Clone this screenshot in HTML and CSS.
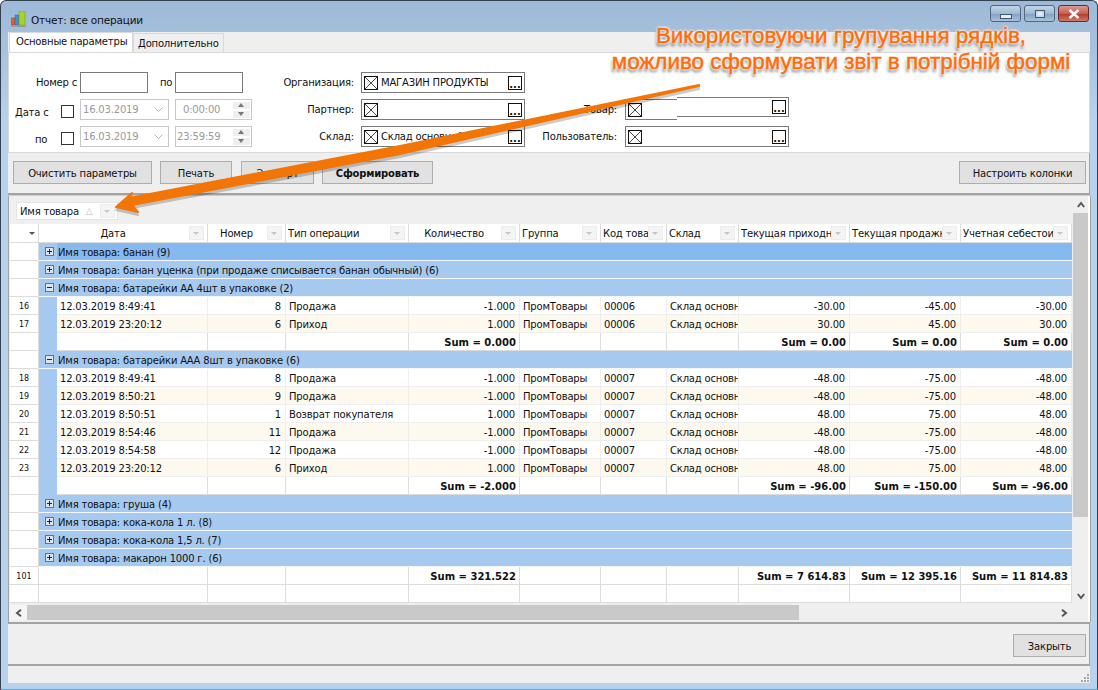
FILE: index.html
```html
<!DOCTYPE html>
<html>
<head>
    <meta charset="UTF-8">
    <title>Отчет: все операции</title>
    <link rel="stylesheet" href="styles.css">
</head>
<body>
<div class="window">
    <div class="titlebar">
        <svg class="app_icon" width="16" height="16" viewBox="0 0 16 16">
            <rect x="0" y="7" width="4" height="7" fill="#e0603a" stroke="#a8402a" stroke-width="0.5"/>
            <rect x="4" y="4" width="4" height="10" fill="#3f8ed8" stroke="#2a6aa8" stroke-width="0.5"/>
            <rect x="8" y="0" width="6" height="14" fill="#a8d22a" stroke="#6f9a1e" stroke-width="0.5"/>
            <rect x="0" y="14" width="15" height="2" fill="#9a9a9a"/>
        </svg>
        <span class="title_text">Отчет: все операции</span>
        <div class="win_btns">
            <div class="win_btn"><span class="glyph_min"></span></div>
            <div class="win_btn"><span class="glyph_max"></span></div>
            <div class="win_btn close"><svg width="12" height="10" viewBox="0 0 12 10"><path d="M1.5 1 L10.5 9 M10.5 1 L1.5 9" stroke="#fff" stroke-width="2.4"/></svg></div>
        </div>
    </div>

    <div class="tabs">
        <div class="tab active">Основные параметры</div>
        <div class="tab">Дополнительно</div>
    </div>

    <div class="params">
        <div class="pcol col1">
            <div class="prow">
                <label class="lbl_nomer">Номер с</label>
                <div class="inp"></div>
                <label class="lbl_po">по</label>
                <div class="inp"></div>
            </div>
            <div class="prow">
                <label class="lbl_date">Дата с</label>
                <div class="chk"></div>
                <div class="date">16.03.2019<svg class="dd" width="9" height="6" viewBox="0 0 9 6"><path d="M0.5 0.5 L4.5 4.5 L8.5 0.5" fill="none" stroke="#b5b5b5"/></svg></div>
                <div class="time"><span class="time_val center">0:00:00</span><span class="spin"><i class="up"></i><i class="down"></i></span></div>
            </div>
            <div class="prow">
                <label class="lbl_date2">по</label>
                <div class="chk"></div>
                <div class="date">16.03.2019<svg class="dd" width="9" height="6" viewBox="0 0 9 6"><path d="M0.5 0.5 L4.5 4.5 L8.5 0.5" fill="none" stroke="#b5b5b5"/></svg></div>
                <div class="time"><span class="time_val">23:59:59</span><span class="spin"><i class="up"></i><i class="down"></i></span></div>
            </div>
        </div>
        <div class="pcol col2">
            <div class="prow">
                <label>Организация:</label>
                <div class="field"><span class="xbox"></span><span class="fval">МАГАЗИН ПРОДУКТЫ</span><span class="dots">...</span></div>
            </div>
            <div class="prow">
                <label>Партнер:</label>
                <div class="field"><span class="xbox"></span><span class="fval"></span><span class="dots">...</span></div>
            </div>
            <div class="prow">
                <label>Склад:</label>
                <div class="field"><span class="xbox"></span><span class="fval">Склад основной</span><span class="dots">...</span></div>
            </div>
        </div>
        <div class="pcol col3">
            <div class="prow"></div>
            <div class="prow">
                <label>Товар:</label>
                <div class="field"><span class="xbox"></span><span class="fval"></span>
                    <div class="patch"><span class="dots">...</span></div>
                </div>
            </div>
            <div class="prow">
                <label>Пользователь:</label>
                <div class="field"><span class="xbox"></span><span class="fval"></span><span class="dots">...</span></div>
            </div>
        </div>
    </div>

    <div class="toolbar">
        <button class="b_clear">Очистить параметры</button>
        <button class="b_print">Печать</button>
        <button class="b_export">Экспорт</button>
        <button class="b_make">Сформировать</button>
        <button class="b_cols">Настроить колонки</button>
    </div>

    <div class="grid">
        <div class="grid_main">
            <div class="groupby">
                <div class="chip">Имя товара<span class="sort">△</span><span class="filter"></span></div>
            </div>
            <table>
                <colgroup>
                    <col class="c_num"><col class="c_ind"><col class="c_date"><col class="c_nom"><col class="c_tip"><col class="c_kol"><col class="c_grp"><col class="c_kod"><col class="c_skl"><col class="c_pr"><col class="c_pr"><col class="c_pr">
                </colgroup>
                <thead>
                    <tr>
                        <th class="corner"><span class="corner_arrow"></span></th>
                        <th colspan="2"><div class="hd"><span class="htxt center">Дата</span><span class="filter"></span></div></th>
                        <th><div class="hd"><span class="htxt center">Номер</span><span class="filter"></span></div></th>
                        <th><div class="hd"><span class="htxt">Тип операции</span><span class="filter"></span></div></th>
                        <th><div class="hd"><span class="htxt center">Количество</span><span class="filter"></span></div></th>
                        <th><div class="hd"><span class="htxt">Группа</span><span class="filter"></span></div></th>
                        <th><div class="hd"><span class="htxt">Код това</span><span class="filter"></span></div></th>
                        <th><div class="hd"><span class="htxt">Склад</span><span class="filter"></span></div></th>
                        <th><div class="hd"><span class="htxt">Текущая приходн</span><span class="filter"></span></div></th>
                        <th><div class="hd"><span class="htxt">Текущая продажн</span><span class="filter"></span></div></th>
                        <th><div class="hd"><span class="htxt">Учетная себестои</span><span class="filter"></span></div></th>
                    </tr>
                </thead>
                <tbody>
                    <tr class="group sel"><td class="num"></td><td class="ind"><span class="exp plus"></span></td><td colspan="10">Имя товара: банан (9)</td></tr>
                    <tr class="group"><td class="num"></td><td class="ind"><span class="exp plus"></span></td><td colspan="10">Имя товара: банан уценка (при продаже списывается банан обычный) (6)</td></tr>
                    <tr class="group"><td class="num"></td><td class="ind"><span class="exp"></span></td><td colspan="10">Имя товара: батарейки АА 4шт в упаковке (2)</td></tr>
                    <tr><td class="num">16</td><td class="ind"></td><td>12.03.2019 8:49:41</td><td class="r">8</td><td>Продажа</td><td class="r">-1.000</td><td>ПромТовары</td><td>00006</td><td>Склад основн</td><td class="r">-30.00</td><td class="r">-45.00</td><td class="r">-30.00</td></tr>
                    <tr class="alt"><td class="num">17</td><td class="ind"></td><td>12.03.2019 23:20:12</td><td class="r">6</td><td>Приход</td><td class="r">1.000</td><td>ПромТовары</td><td>00006</td><td>Склад основн</td><td class="r">30.00</td><td class="r">45.00</td><td class="r">30.00</td></tr>
                    <tr class="sum"><td class="num"></td><td class="ind"></td><td></td><td></td><td></td><td>Sum = 0.000</td><td></td><td></td><td></td><td>Sum = 0.00</td><td>Sum = 0.00</td><td>Sum = 0.00</td></tr>
                    <tr class="group"><td class="num"></td><td class="ind"><span class="exp"></span></td><td colspan="10">Имя товара: батарейки ААА 8шт в упаковке (6)</td></tr>
                    <tr><td class="num">18</td><td class="ind"></td><td>12.03.2019 8:49:41</td><td class="r">8</td><td>Продажа</td><td class="r">-1.000</td><td>ПромТовары</td><td>00007</td><td>Склад основн</td><td class="r">-48.00</td><td class="r">-75.00</td><td class="r">-48.00</td></tr>
                    <tr class="alt"><td class="num">19</td><td class="ind"></td><td>12.03.2019 8:50:21</td><td class="r">9</td><td>Продажа</td><td class="r">-1.000</td><td>ПромТовары</td><td>00007</td><td>Склад основн</td><td class="r">-48.00</td><td class="r">-75.00</td><td class="r">-48.00</td></tr>
                    <tr><td class="num">20</td><td class="ind"></td><td>12.03.2019 8:50:51</td><td class="r">1</td><td>Возврат покупателя</td><td class="r">1.000</td><td>ПромТовары</td><td>00007</td><td>Склад основн</td><td class="r">48.00</td><td class="r">75.00</td><td class="r">48.00</td></tr>
                    <tr class="alt"><td class="num">21</td><td class="ind"></td><td>12.03.2019 8:54:46</td><td class="r">11</td><td>Продажа</td><td class="r">-1.000</td><td>ПромТовары</td><td>00007</td><td>Склад основн</td><td class="r">-48.00</td><td class="r">-75.00</td><td class="r">-48.00</td></tr>
                    <tr><td class="num">22</td><td class="ind"></td><td>12.03.2019 8:54:58</td><td class="r">12</td><td>Продажа</td><td class="r">-1.000</td><td>ПромТовары</td><td>00007</td><td>Склад основн</td><td class="r">-48.00</td><td class="r">-75.00</td><td class="r">-48.00</td></tr>
                    <tr class="alt"><td class="num">23</td><td class="ind"></td><td>12.03.2019 23:20:12</td><td class="r">6</td><td>Приход</td><td class="r">1.000</td><td>ПромТовары</td><td>00007</td><td>Склад основн</td><td class="r">48.00</td><td class="r">75.00</td><td class="r">48.00</td></tr>
                    <tr class="sum"><td class="num"></td><td class="ind"></td><td></td><td></td><td></td><td>Sum = -2.000</td><td></td><td></td><td></td><td>Sum = -96.00</td><td>Sum = -150.00</td><td>Sum = -96.00</td></tr>
                    <tr class="group"><td class="num"></td><td class="ind"><span class="exp plus"></span></td><td colspan="10">Имя товара: груша (4)</td></tr>
                    <tr class="group"><td class="num"></td><td class="ind"><span class="exp plus"></span></td><td colspan="10">Имя товара: кока-кола 1 л. (8)</td></tr>
                    <tr class="group"><td class="num"></td><td class="ind"><span class="exp plus"></span></td><td colspan="10">Имя товара: кока-кола 1,5 л. (7)</td></tr>
                    <tr class="group"><td class="num"></td><td class="ind"><span class="exp plus"></span></td><td colspan="10">Имя товара: макарон 1000 г. (6)</td></tr>
                    <tr class="sum total"><td class="num">101</td><td colspan="2"></td><td></td><td></td><td>Sum = 321.522</td><td></td><td></td><td></td><td>Sum = 7 614.83</td><td>Sum = 12 395.16</td><td>Sum = 11 814.83</td></tr>
                    <tr class="sum total"><td class="num"></td><td colspan="2"></td><td></td><td></td><td></td><td></td><td></td><td></td><td></td><td></td><td></td></tr>
                </tbody>
            </table>
            <div class="hscroll">
                <span class="sbtn active"><svg width="8" height="8" viewBox="0 0 8 8"><path d="M6 0.8 L2 4 L6 7.2" fill="none" stroke="#555" stroke-width="2"/></svg></span>
                <span class="hthumb"></span>
                <span class="sbtn end"><svg width="8" height="8" viewBox="0 0 8 8"><path d="M2 0.8 L6 4 L2 7.2" fill="none" stroke="#555" stroke-width="2"/></svg></span>
            </div>
        </div>
        <div class="vscroll">
            <span class="sbtn"><svg width="8" height="8" viewBox="0 0 8 8"><path d="M0.8 6 L4 2 L7.2 6" fill="none" stroke="#555" stroke-width="2"/></svg></span>
            <span class="vthumb"></span>
            <span class="sbtn end"><svg width="8" height="8" viewBox="0 0 8 8"><path d="M0.8 2 L4 6 L7.2 2" fill="none" stroke="#555" stroke-width="2"/></svg></span>
        </div>
    </div>

    <div class="footer">
        <button class="b_close">Закрыть</button>
    </div>
    <div class="status">
        <svg width="9" height="9" viewBox="0 0 9 9" fill="#a9a9a9">
            <rect x="6" y="0" width="2" height="2"/><rect x="3" y="3" width="2" height="2"/><rect x="6" y="3" width="2" height="2"/>
            <rect x="0" y="6" width="2" height="2"/><rect x="3" y="6" width="2" height="2"/><rect x="6" y="6" width="2" height="2"/>
        </svg>
    </div>
</div>

<!-- callout pasted over the window -->
<svg class="arrow" width="1098" height="690" viewBox="0 0 1098 690">
    <polygon class="arrow_shadow" points="699,85 400,146 129,198 132,193 116,207 138,212 132,205 400,154 699,86"/>
    <polygon class="arrow_body" points="699,85 400,146 129,198 132,193 116,207 138,212 132,205 400,154 699,86"/>
</svg>
<div class="callout">Використовуючи групування рядків,<br>можливо сформувати звіт в потрібній формі</div>
</body>
</html>
```

FILE: styles.css
```css
html,
body {
    margin: 0;
    height: 100%;
    overflow: hidden;
}
body {
    position: relative;
    background: #fff;
    font-family: "DejaVu Sans", sans-serif;
    font-size: 10px;
    letter-spacing: -0.18px;
    color: #111;
}
.window {
    box-sizing: border-box;
    width: 1098px;
    height: 690px;
    padding: 0 7px 6px 7px;
    display: flex;
    flex-direction: column;
    border: 1px solid #33424f;
    border-bottom: 1px solid #2cc0d8;
    border-radius: 6px 6px 0 0;
    background: linear-gradient(180deg, #9db9d7 0, #b9d1ea 120px);
}

/* title bar */
.titlebar {
    height: 31px;
    display: flex;
    align-items: center;
    flex-shrink: 0;
}
.app_icon {
    margin: 4px 0 0 3px;
}
.title_text {
    margin: 7px 0 0 4px;
    font-size: 10.5px;
    color: #111;
}
.win_btns {
    margin: -6px 1px 0 auto;
    display: flex;
    gap: 3px;
}
.win_btn {
    width: 31px;
    height: 17px;
    box-sizing: border-box;
    border: 1px solid #4e6680;
    border-radius: 3px;
    display: flex;
    align-items: center;
    justify-content: center;
    background: linear-gradient(180deg, #c2d5e9 0, #9db8d6 50%, #7f9fc2 52%, #a9c3dd 100%);
}
.win_btn.close {
    border-color: #6b2b2b;
    background: linear-gradient(180deg, #dc9a90 0, #c9604f 50%, #b23a2a 52%, #cb7a68 100%);
}
.glyph_min {
    width: 10px;
    height: 3px;
    margin-top: 5px;
    background: #e8eef5;
    border: 1px solid #44566a;
}
.glyph_max {
    width: 8px;
    height: 6px;
    background: #e8eef5;
    border: 1px solid #44566a;
    box-shadow: inset 0 0 0 1.5px #c9d6e4;
}

/* tabs */
.tabs {
    height: 20px;
    display: flex;
    align-items: flex-end;
    flex-shrink: 0;
    background: #efefef;
    padding-left: 1px;
}
.tab {
    box-sizing: border-box;
    height: 19px;
    padding: 4px 4px 0 4px;
    background: #efefef;
    border: 1px solid #d9d9d9;
    border-bottom: none;
}
.tab.active {
    width: 124px;
    height: 20px;
    padding: 3px 0 0 6px;
    background: #fff;
}

/* params */
.params {
    box-sizing: border-box;
    height: 101px;
    flex-shrink: 0;
    display: flex;
    padding: 19px 0 0 0;
    background: #fff;
    border: 1px solid #d9d9d9;
}
.pcol {
    display: flex;
    flex-direction: column;
    gap: 6px;
}
.prow {
    height: 21px;
    display: flex;
    align-items: center;
}
.col1 .lbl_nomer {
    width: 68px;
    margin-right: 3px;
    text-align: right;
}
.col1 .lbl_po {
    width: 15px;
    margin-left: 12px;
}
.lbl_date {
    margin: 6px 0 0 6px;
    width: 46px;
}
.lbl_date2 {
    margin: 6px 0 0 26px;
    width: 26px;
}
.inp {
    box-sizing: border-box;
    width: 68px;
    height: 21px;
    border: 1px solid #7a7a7a;
}
.chk {
    box-sizing: border-box;
    width: 13px;
    height: 13px;
    margin: 3px 6px 0 0;
    border: 1px solid #333;
}
.date {
    box-sizing: border-box;
    width: 89px;
    height: 21px;
    margin-right: 6px;
    padding-left: 2px;
    display: flex;
    align-items: center;
    justify-content: space-between;
    border: 1px solid #c8c8c8;
    color: #999;
}
.dd {
    margin-right: 5px;
}
.time {
    box-sizing: border-box;
    width: 77px;
    height: 21px;
    display: flex;
    align-items: center;
    border: 1px solid #c8c8c8;
    color: #999;
    padding-left: 1px;
}
.time_val {
    flex: 1;
}
.time_val.center {
    padding-left: 6px;
}
.spin {
    width: 17px;
    height: 16px;
    margin-right: 1px;
    display: flex;
    flex-direction: column;
    justify-content: space-between;
}
.spin i {
    display: block;
    height: 7px;
    box-sizing: border-box;
    background: #efefef;
    position: relative;
}
.spin i::after {
    content: "";
    position: absolute;
    left: 5px;
    top: 1px;
    border-left: 3px solid transparent;
    border-right: 3px solid transparent;
}
.spin .up::after {
    border-bottom: 4px solid #777;
}
.spin .down::after {
    border-top: 4px solid #777;
}
.col2 {
    margin-left: 18px;
}
.col2 label {
    width: 84px;
    margin-right: 7px;
    text-align: right;
}
.col3 {
    margin-left: 4px;
}
.col3 label {
    width: 88px;
    margin-right: 8px;
    text-align: right;
}
.field {
    position: relative;
    box-sizing: border-box;
    width: 164px;
    height: 21px;
    display: flex;
    align-items: center;
    padding: 0 1px 0 2px;
    border: 1px solid #7a7a7a;
    background: #fff;
}
.xbox {
    box-sizing: border-box;
    width: 14px;
    height: 14px;
    flex-shrink: 0;
    border: 1px solid #111;
    background: linear-gradient(45deg, transparent 47%, #444 47%, #444 53%, transparent 53%), linear-gradient(-45deg, transparent 47%, #444 47%, #444 53%, transparent 53%);
}
.fval {
    flex: 1;
    margin-left: 3px;
    white-space: nowrap;
}
.dots {
    box-sizing: border-box;
    width: 14px;
    height: 14px;
    flex-shrink: 0;
    margin-right: 1px;
    padding-top: 3px;
    border: 1px solid #111;
    font-weight: bold;
    font-size: 10px;
    line-height: 9px;
    text-align: center;
    letter-spacing: 0;
    overflow: hidden;
}
.patch {
    position: absolute;
    left: 51px;
    right: -1px;
    top: -3px;
    height: 20px;
    box-sizing: border-box;
    display: flex;
    justify-content: flex-end;
    align-items: center;
    padding-right: 1px;
    background: #fff;
    border: 1px solid #7a7a7a;
    border-left: none;
    box-shadow: 0 3px 0 #fff;
}

/* toolbar */
.toolbar {
    box-sizing: border-box;
    height: 42px;
    flex-shrink: 0;
    display: flex;
    align-items: flex-start;
    padding: 8px 3px 0 5px;
    background: #efefef;
    border-bottom: 2px solid #a3a3a3;
    border-right: 1px solid #a3a3a3;
}
button {
    box-sizing: border-box;
    height: 23px;
    font: inherit;
    letter-spacing: inherit;
    color: #111;
    padding: 1px 0 0 0;
    background: #e1e1e1;
    border: 1px solid #adadad;
}
.b_clear {
    width: 139px;
    margin-right: 8px;
}
.b_print {
    width: 72px;
    margin-right: 9px;
}
.b_export {
    width: 73px;
    margin-right: 8px;
}
.b_make {
    width: 111px;
    font-weight: bold;
}
.b_cols {
    width: 127px;
    margin-left: auto;
}

/* grid */
.grid {
    flex: 1;
    min-height: 0;
    display: flex;
    margin-top: 1px;
    background: #efefef;
    border-left: 1px solid #a3a3a3;
    border-right: 2px solid #fff;
    box-shadow: 1px 0 0 #a3a3a3;
}
.grid_main {
    width: 1064px;
    padding-left: 1px;
    box-sizing: border-box;
}
.groupby {
    height: 28px;
    padding: 6px 0 0 6px;
    box-sizing: border-box;
}
.chip {
    box-sizing: border-box;
    width: 102px;
    height: 18px;
    display: flex;
    align-items: center;
    padding: 0 2px 0 3px;
    background: #fff;
    border: 1px solid #e4e4e4;
}
.sort {
    margin-left: 7px;
    color: #b8b8b8;
    font-size: 9px;
}
.chip .filter {
    margin-left: auto;
}
.filter {
    position: relative;
    box-sizing: border-box;
    width: 15px;
    height: 14px;
    flex-shrink: 0;
    background: #f4f4f4;
    border: 1px solid #ececec;
}
.filter::after {
    content: "";
    position: absolute;
    left: 3px;
    top: 5px;
    border-left: 3px solid transparent;
    border-right: 3px solid transparent;
    border-top: 3px solid #c6c6c6;
}
table {
    width: 1062px;
    table-layout: fixed;
    border-collapse: separate;
    border-spacing: 0;
    background: #fff;
}
.c_num { width: 29px; }
.c_ind { width: 18px; }
.c_date { width: 151px; }
.c_nom { width: 78px; }
.c_tip { width: 123px; }
.c_kol { width: 111px; }
.c_grp { width: 81px; }
.c_kod { width: 66px; }
.c_skl { width: 72px; }
.c_pr { width: 111px; }
th {
    height: 19px;
    padding: 0;
    font-weight: normal;
    text-align: left;
    box-sizing: border-box;
    border-right: 1px solid #dcdcdc;
    border-bottom: 1px solid #dcdcdc;
}
.hd {
    display: flex;
    align-items: center;
    padding: 0 3px 0 2px;
}
.htxt {
    flex: 1;
    overflow: hidden;
    white-space: nowrap;
}
.htxt.center {
    padding-right: 4px;
    text-align: center;
}
th.corner {
    text-align: right;
}
.corner_arrow {
    display: inline-block;
    margin-right: 3px;
    vertical-align: middle;
    border-left: 3px solid transparent;
    border-right: 3px solid transparent;
    border-top: 3px solid #555;
}
td {
    box-sizing: border-box;
    height: 18px;
    padding: 2px 1px 0 3px;
    overflow: hidden;
    white-space: nowrap;
    border-right: 1px solid #eeeeee;
    border-bottom: 1px solid #eeeeee;
}
td.r {
    text-align: right;
    padding-right: 4px;
}
td.num {
    padding: 1px 0 0 0;
    font-size: 8px;
    letter-spacing: 0;
    text-align: center;
    border-right: 1px solid #dcdcdc;
    border-bottom: 1px solid #dcdcdc;
}
td.ind {
    padding: 0 0 0 2px;
    background: #a6c9ef;
    border-right: none;
    border-bottom-color: #a6c9ef;
    text-align: center;
}
tr.alt td:not(.num):not(.ind) {
    background: #fdf9ef;
}
tr.group td:not(.num) {
    background: #a6c9ef;
    padding-left: 1px;
    border-right: none;
    border-bottom: 1px solid #f4f8fc;
}
tr.group td.ind {
    padding-left: 2px;
}
tr.group.sel td:not(.num):not(.ind) {
    background: #85b9f0;
}
tr.sum td:not(.num):not(.ind) {
    padding-right: 3px;
    text-align: right;
    font-weight: bold;
    letter-spacing: 0;
    border-right: 1px solid #dcdcdc;
    border-bottom: 1px solid #dcdcdc;
}
.exp {
    position: relative;
    display: inline-block;
    box-sizing: border-box;
    width: 9px;
    height: 9px;
    vertical-align: -1px;
    background: #dbe6f1;
    border: 1px solid #6f6f6f;
}
.exp::before {
    content: "";
    position: absolute;
    left: 1px;
    top: 3px;
    width: 5px;
    height: 1px;
    background: #222;
}
.exp.plus::after {
    content: "";
    position: absolute;
    left: 3px;
    top: 1px;
    width: 1px;
    height: 5px;
    background: #222;
}

/* scrollbars */
.hscroll {
    width: 1062px;
    height: 15px;
    margin-top: 2px;
    display: flex;
    align-items: stretch;
}
.sbtn {
    width: 17px;
    display: flex;
    align-items: center;
    justify-content: center;
    flex-shrink: 0;
}
.sbtn.active {
    background: #f5f5f5;
}
.hthumb {
    width: 772px;
    background: #c9c9c9;
}
.hscroll .end {
    margin-left: auto;
}
.vscroll {
    width: 15px;
    display: flex;
    flex-direction: column;
    flex-shrink: 0;
    padding: 0 0 18px 0;
    box-sizing: border-box;
}
.vscroll .sbtn {
    width: 15px;
    height: 17px;
}
.vthumb {
    height: 304px;
    background: #c9c9c9;
}
.vscroll .end {
    margin-top: auto;
}

/* bottom */
.footer {
    height: 42px;
    flex-shrink: 0;
    box-sizing: border-box;
    display: flex;
    justify-content: flex-end;
    padding: 10px 3px 0 0;
    background: #efefef;
    border-top: 2px solid #a3a3a3;
    border-right: 1px solid #a3a3a3;
}
.b_close {
    width: 73px;
}
.status {
    height: 19px;
    flex-shrink: 0;
    box-sizing: border-box;
    display: flex;
    justify-content: flex-end;
    align-items: flex-end;
    background: #efefef;
    border-top: 2px solid #a3a3a3;
}

/* callout */
.arrow {
    position: absolute;
    left: 0;
    top: 0;
}
.arrow_body {
    fill: #f27506;
    stroke: #f27506;
    stroke-width: 2;
    stroke-linejoin: round;
}
.arrow_shadow {
    fill: #000;
    opacity: 0.2;
    stroke: #000;
    stroke-width: 2;
    stroke-linejoin: round;
    transform: translate(0, 3px);
}
.callout {
    position: absolute;
    left: 541px;
    top: 23px;
    width: 600px;
    text-align: center;
    font-family: "Liberation Sans", sans-serif;
    font-size: 22.4px;
    letter-spacing: 0;
    line-height: 26px;
    color: #ff6c0a;
    -webkit-text-stroke: 0.5px #ff6c0a;
    text-shadow: 0 0 2px #fff, 0 0 2px #fff, 0 0 3px #fff, 0 0 3px #fff, -1px 3px 3px rgba(0, 0, 0, 0.6);
}
```
